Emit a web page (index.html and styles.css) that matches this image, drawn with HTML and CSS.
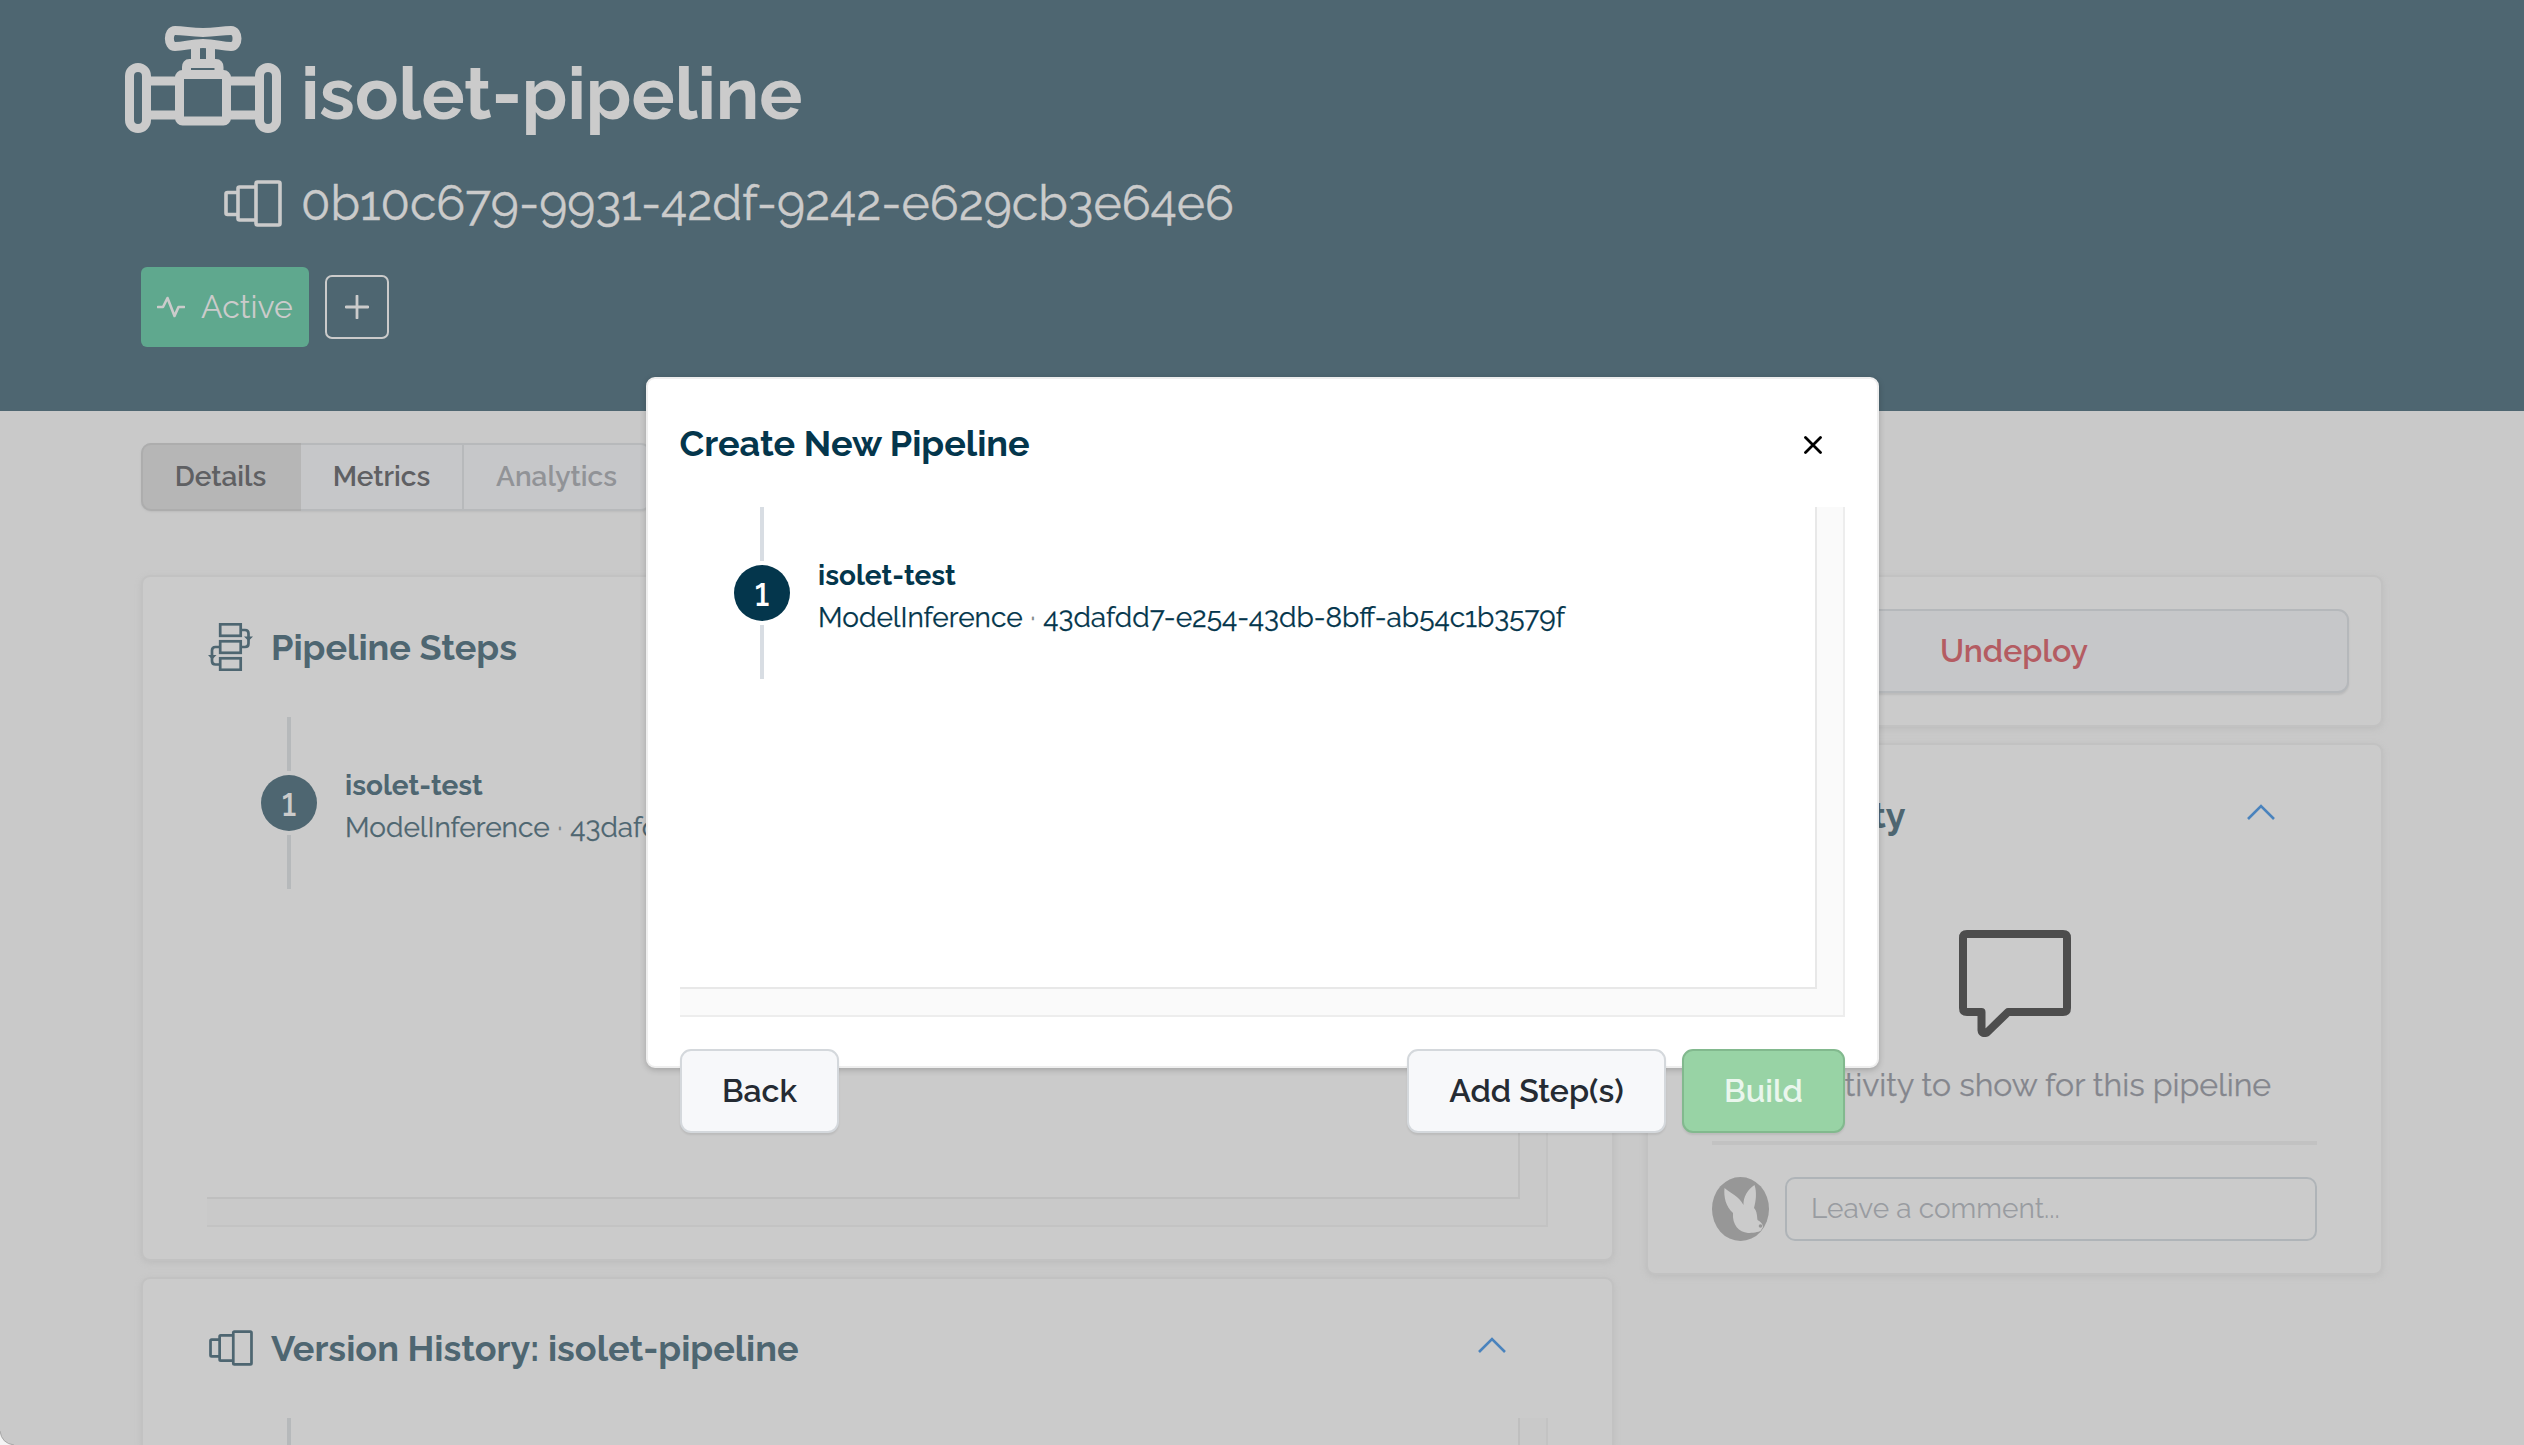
FILE: index.html
```html
<!DOCTYPE html>
<html lang="en">
<head>
<meta charset="utf-8">
<title>isolet-pipeline</title>
<link rel="stylesheet" href="styles.css">
</head>
<body>
<svg class="defs" aria-hidden="true">
  <symbol id="stack" viewBox="0 0 58 47">
    <g fill="none" stroke="currentColor" stroke-width="3.600" stroke-linejoin="round">
      <rect x="32" y="2" width="24" height="43" rx="1.5"/>
      <path d="M32 7H15.500a1.500 1.500 0 0 0-1.500 1.500v30a1.500 1.500 0 0 0 1.500 1.500H32M14 12.500H3.500a1.500 1.500 0 0 0-1.500 1.500v19a1.500 1.500 0 0 0 1.500 1.500H14"/>
    </g>
  </symbol>
  <symbol id="up" viewBox="0 0 28 16">
    <path d="M1 15 14 2 27 15" fill="none" stroke="currentColor" stroke-width="2.600"/>
  </symbol>
</svg>

<header class="hero">
  <div class="hero-name">
    <svg class="valve" viewBox="0 0 156 107" fill="none" stroke="currentColor" stroke-width="9">
      <rect x="4.500" y="41.500" width="17" height="61" rx="8.500"/>
      <rect x="134.500" y="41.500" width="17" height="61" rx="8.500"/>
      <path d="M22 55H53M22 89H53M103 55H134M103 89H134"/>
      <rect x="54.500" y="48.500" width="47" height="46.500" rx="3"/>
      <path d="M61.500 48V41q0-3.500 3-3.500H91q3 0 3 3.500V48"/>
      <path d="M70.500 37V22M85.500 37V22"/>
      <path d="M50 4.500C42.500 4.500 42.500 20.500 50 20.500C60 20.500 65 17.500 78 17.500S96 20.500 106 20.500C114 20.500 114 4.500 106 4.500C96 4.500 91 6.500 78 6.500S60 4.500 50 4.500Z"/>
    </svg>
    <h1 class="hero-title">isolet-pipeline</h1>
  </div>
  <div class="hero-version">
    <svg class="hero-stack"><use href="#stack"/></svg>
    <span class="hero-id">0b10c679-9931-42df-9242-e629cb3e64e6</span>
  </div>
  <div class="hero-tags">
    <span class="status">
      <svg class="pulse" viewBox="0 0 28 22"><path d="M1 11H6L10.500 2 17.500 20 21.500 11H27" fill="none" stroke="currentColor" stroke-width="2.600" stroke-linecap="round" stroke-linejoin="round"/></svg>
      Active
    </span>
    <button class="add-tag"><svg class="plus" viewBox="0 0 24 24"><path d="M12 1V23M1 12H23" stroke="currentColor" stroke-width="2.800" stroke-linecap="round"/></svg></button>
  </div>
</header>

<main class="content">
  <nav class="tabs">
    <a class="tab tab-active">Details</a>
    <a class="tab">Metrics</a>
    <a class="tab tab-disabled">Analytics</a>
  </nav>
  <div class="columns">
    <div class="column">
      <section class="card card-steps">
        <div class="card-head">
          <svg class="card-icon steps-icon" viewBox="0 0 45 48" fill="none" stroke="currentColor" stroke-width="2.700">
            <rect x="12.200" y="1.300" width="20.500" height="11.500"/>
            <rect x="12.200" y="18.300" width="20.500" height="11.500"/>
            <rect x="12.200" y="35.300" width="20.500" height="11.500"/>
            <path d="M33 7H37q3.500 0 3.500 3.500V20.500q0 3.500-3.500 3.500H33M12 24H7.500q-3.500 0-3.500 3.500V38q0 3.500 3.500 3.500H12"/>
            <path d="M36 13.500H45L40.500 18ZM0 32H8.500L4.200 36.500Z" fill="currentColor" stroke="none"/>
          </svg>
          <h2 class="card-title">Pipeline Steps</h2>
        </div>
        <div class="pane">
          <div class="pane-body">
            <div class="node"><i class="link"></i><b class="dot">1</b><i class="link"></i></div>
            <div class="step"><div class="step-name">isolet-test</div><div class="step-id">ModelInference <span class="sep">·</span> 43dafdd7-e254-43db-8bff-ab54c1b3579f</div></div>
          </div>
        </div>
      </section>
      <section class="card card-history">
        <div class="card-head">
          <svg class="card-icon stack-icon"><use href="#stack"/></svg>
          <h2 class="card-title">Version History: isolet-pipeline</h2>
          <svg class="chevron"><use href="#up"/></svg>
        </div>
        <div class="pane">
          <div class="pane-body">
            <div class="node"><i class="link"></i></div>
          </div>
        </div>
      </section>
    </div>
    <aside class="column column-side">
      <section class="card card-action">
        <button class="btn undeploy">Undeploy</button>
      </section>
      <section class="card card-activity">
        <div class="card-head">
          <svg class="card-icon stack-icon"><use href="#stack"/></svg>
          <h2 class="card-title">Activity</h2>
          <svg class="chevron"><use href="#up"/></svg>
        </div>
        <svg class="bubble" viewBox="0 0 112 107"><path d="M8 4H104q4 0 4 4V78q0 4-4 4H49L28 102.500q-5 2-5.500-2.500V82H8q-4 0-4-4V8q0-4 4-4Z" fill="none" stroke="currentColor" stroke-width="8" stroke-linejoin="round"/></svg>
        <p class="empty">No activity to show for this pipeline</p>
        <div class="rule"></div>
        <div class="comment">
          <svg class="avatar" viewBox="0 0 57 64">
            <ellipse cx="28.500" cy="32" rx="28.500" ry="32" fill="#979797"/>
            <path d="M12.500 11C18 16 27 19 31.500 28C31 20 36 12 42.500 8C45 15 44 24 42 31C45 34 45 39 45.500 43C49 45 51 47 51 50L48.500 54C47 55 40 56 36 56C27 55 20 48 21 36C14 30 11.500 20 12.500 11Z" fill="#cbcbcb"/>
            <circle cx="48.500" cy="49" r="1.800" fill="#979797"/>
          </svg>
          <div class="comment-input">Leave a comment...</div>
        </div>
      </section>
    </aside>
  </div>
</main>

<div class="modal" role="dialog">
  <div class="modal-head">
    <h2 class="modal-title">Create New Pipeline</h2>
    <svg class="close" viewBox="0 0 18 18"><path d="M1.500 1.500 16.500 16.500M16.500 1.500 1.500 16.500" stroke="currentColor" stroke-width="2.800" stroke-linecap="round"/></svg>
  </div>
  <div class="pane">
    <div class="pane-body">
      <div class="node"><i class="link"></i><b class="dot">1</b><i class="link"></i></div>
      <div class="step"><div class="step-name">isolet-test</div><div class="step-id">ModelInference <span class="sep">·</span> 43dafdd7-e254-43db-8bff-ab54c1b3579f</div></div>
    </div>
  </div>
  <div class="modal-actions">
    <button class="btn btn-back">Back</button>
    <button class="btn btn-add">Add Step(s)</button>
    <button class="btn btn-build">Build</button>
  </div>
</div>
<svg class="corner" viewBox="0 0 18 18"><path d="M0 0Q2 16 18 18H0Z" fill="#f4f4f4"/><path d="M0 0Q2 16 18 18" fill="none" stroke="#999"/></svg>
</body>
</html>
```
FILE: styles.css
```css
* { box-sizing: border-box; }
body {
  position: relative;
  margin: 0;
  width: 2524px;
  height: 1445px;
  overflow: hidden;
  background: #c9c9c9;
  font-family: Raleway, Lato, sans-serif;
}
h1, h2, p { margin: 0; }
svg { display: block; flex: none; }
.defs { position: absolute; width: 0; height: 0; }

.hero { height: 411px; padding-top: 26px; background: #4e6671; color: #cbcbcb; }
.hero-name { display: flex; height: 107px; padding-left: 125px; }
.valve { width: 156px; height: 107px; }
.hero-title { margin: 28px 0 0 20px; height: 80px; font-size: 72px; line-height: 80px; font-weight: 700; }
.hero-version { display: flex; margin-top: 38px; padding-left: 224px; }
.hero-stack { width: 58px; height: 47px; margin-top: 9px; }
.hero-id { height: 60px; margin-left: 19px; font-size: 48px; line-height: 65px; -webkit-text-stroke: .4px currentColor; }
.hero-tags { display: flex; align-items: center; gap: 16px; margin-top: 36px; padding-left: 141px; }
.status { display: flex; gap: 16px; width: 168px; height: 80px; padding-left: 16px; border-radius: 6px; background: #5fa88e; font-size: 32px; line-height: 79px; }
.pulse { width: 28px; height: 22px; margin-top: 29px; }
.add-tag { display: grid; place-items: center; width: 64px; height: 64px; border: 2px solid #cbcbcb; border-radius: 7px; background: none; color: #cbcbcb; }
.plus { width: 24px; height: 24px; }

.content { padding: 32px 141px 0; }
.tabs { display: flex; width: 510px; height: 68px; border: 2px solid #b7b9bb; border-radius: 10px; background: #c6c7c9; box-shadow: 0 1px 2px #bbb; font-size: 28px; line-height: 64px; font-weight: 600; }
.tab { flex: none; width: 163px; text-align: center; color: #5f6063; border-right: 2px solid #b7b9bb; }
.tab-active { width: 160px; margin: -2px 0 -2px -2px; padding-right: 3px; background: #b6b6b6; border: 2px solid #adadad; border-right: 0; border-radius: 10px 0 0 10px; }
.tab-disabled { width: auto; flex: 1; border: 0; color: #919397; }

.columns { display: flex; gap: 32px; margin-top: 64px; }
.column { display: flex; flex-direction: column; gap: 16px; width: 1473px; }
.column-side { width: 737px; }
.card { border: 2px solid #c2c2c2; border-radius: 9px; background: #cbcbcb; box-shadow: 0 2px 6px #bdbdbd; }
.card-steps { height: 686px; padding-top: 1px; }
.card-history { height: 168px; overflow: hidden; border-bottom: 0; border-radius: 9px 9px 0 0; }
.card-head { display: flex; align-items: center; height: 93px; padding: 45px 106px 0 66px; color: #4e6671; }
.steps-icon { width: 45px; height: 48px; margin-left: -1px; }
.stack-icon { width: 44px; height: 36px; }
.card-title { margin: 0 auto 0 18px; font-size: 36px; line-height: 44px; font-weight: 700; }
.chevron { width: 28px; height: 16px; margin-bottom: 6px; color: #4a83bd; }

.pane { height: 510px; padding: 0 26px 26px 0; border: solid #c3c3c3; border-width: 0 2px 2px 0; background: #c9c9c9; }
.card .pane { width: 1341px; margin: 46px 0 0 64px; }
.pane-body { display: flex; height: 482px; padding-left: 54px; border: solid #bfbfbf; border-width: 0 2px 2px 0; background: #cbcbcb; color: #4e6671; }
.card-history .pane, .card-history .pane-body { height: 60px; }
.node { display: flex; flex-direction: column; align-items: center; gap: 4px; width: 56px; }
.link { width: 4px; height: 54px; background: #b6b9bb; }
.dot { width: 56px; height: 56px; border-radius: 50%; background: #4e6671; color: #cbcbcb; font-size: 31px; line-height: 60px; font-weight: 600; text-align: center; font-variant-numeric: lining-nums; }
.step { margin: 48px 0 0 28px; font-size: 28px; line-height: 42px; white-space: nowrap; }
.step-name { font-weight: 700; }
.step-id { -webkit-text-stroke: .25px currentColor; }
.sep { margin: 0 .5px; color: #7f868b; }

.card-action { height: 152px; padding: 32px 31px 0; }
.btn { flex: none; height: 84px; padding: 0 0 2px; border: 2px solid #d4d8dc; border-radius: 11px; background: #f7f8fa; box-shadow: 0 2px 2px rgba(0,0,0,.08); color: #252b33; font-family: inherit; font-size: 32px; font-weight: 600; }
.undeploy { width: 670px; border-color: #b5b8bb; background: #c6c7c9; color: #b45c62; }
.card-activity { height: 532px; padding-top: 1px; }
.bubble { width: 112px; height: 107px; margin: 91px auto 0; color: #4d4d4d; }
.empty { height: 40px; margin-top: 27px; font-size: 32px; line-height: 42px; text-align: center; color: #84868d; -webkit-text-stroke: .25px currentColor; }
.rule { height: 4px; margin: 37px 64px 0; background: #c2c2c2; }
.comment { display: flex; gap: 16px; margin: 32px 64px 0; }
.avatar { width: 57px; height: 64px; }
.comment-input { flex: 1; height: 64px; padding-left: 24px; border: 2px solid #afb4b8; border-radius: 10px; color: #999ca1; font-size: 28px; line-height: 59px; }

.modal { position: absolute; left: 646px; top: 377px; width: 1233px; height: 691px; padding: 42px 32px 0; border: 2px solid #eee; border-radius: 9px; background: #fff; box-shadow: 0 2px 6px rgba(0,0,0,.2); color: #04364c; }
.modal-head { display: flex; align-items: center; height: 44px; margin-bottom: 42px; }
.modal-title { margin-left: -.5px; font-size: 36px; line-height: 44px; font-weight: 700; }
.close { width: 18px; height: 18px; margin: 3px 23px 0 auto; color: #000; }
.modal .pane { border-color: #ededed; background: #fafafa; }
.modal .pane-body { border-color: #e8e8e8; background: #fff; color: #04364c; }
.modal .link { background: #d8dde3; }
.modal .dot { background: #04364c; color: #fff; }
.modal-actions { display: flex; gap: 16px; margin-top: 32px; }
.btn-back { width: 159px; margin-right: auto; }
.btn-add { width: 259px; }
.btn-build { width: 163px; border-color: #82b98e; background: #98d3a5; color: #eaf6ed; }
.corner { position: absolute; left: 0; bottom: 0; width: 14px; height: 14px; }
```
